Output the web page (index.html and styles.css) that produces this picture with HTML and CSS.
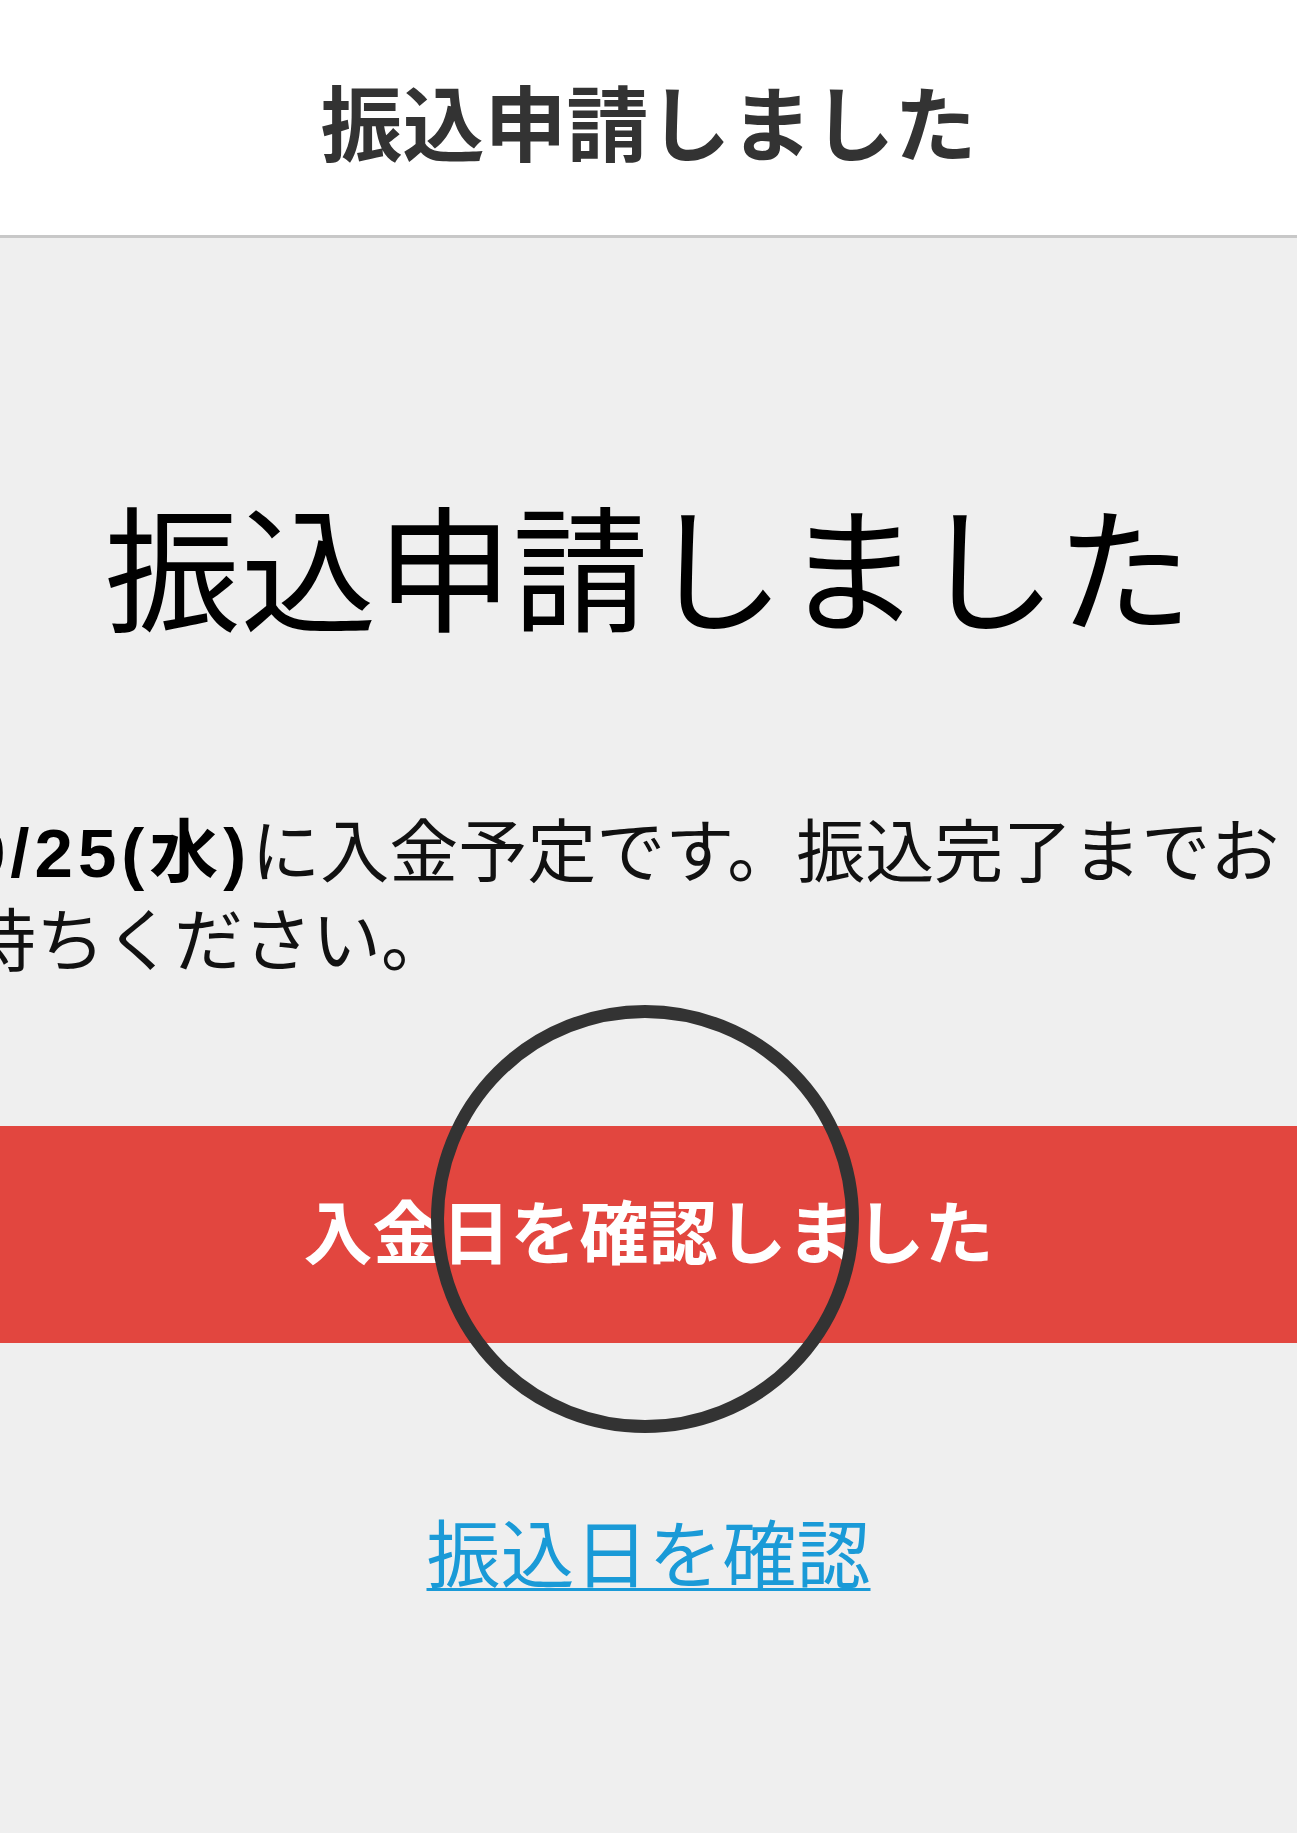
FILE: index.html
```html
<!DOCTYPE html>
<html lang="ja">
<head>
<meta charset="utf-8">
<title>振込申請しました</title>
<link rel="stylesheet" href="styles.css">
</head>
<body>
<header class="topbar">
  <h1 class="topbar-title">振込申請しました</h1>
</header>
<main class="content">
  <h2 class="headline">振込申請しました</h2>
  <p class="message"><strong class="date">9/25(水)</strong>に入金予定です。振込完了までお待ちください。</p>
  <button class="confirm-btn" type="button">入金日を確認しました</button>
  <div class="link-row"><a class="check-link" href="#">振込日を確認</a></div>
</main>
<div class="tap-ring"></div>
</body>
</html>
```
FILE: styles.css
```css
html, body {
  margin: 0;
  padding: 0;
  overflow-x: hidden;
}
body {
  background: #efefef;
  font-family: "Noto Sans CJK JP", "Noto Sans", sans-serif;
  color: #000;
  min-height: 1833px;
  position: relative;
}
.topbar {
  height: 235px;
  background: #ffffff;
  border-bottom: 3px solid #c8c8c8;
  display: flex;
  align-items: center;
  justify-content: center;
}
.topbar-title {
  margin: 0;
  padding-top: 4px;
  font-size: 82px;
  line-height: 1;
  font-weight: 700;
  color: #333333;
}
.content {
  display: flex;
  flex-direction: column;
}
.headline {
  margin: 257px 0 0;
  font-size: 136px;
  line-height: 136px;
  font-weight: 400;
  text-align: center;
  color: #000;
}
.message {
  margin: 175px 0 0 -33px;
  width: 1340px;
  font-size: 69px;
  line-height: 82px;
  color: #111;
  text-align: left;
}
.date {
  font-family: "Liberation Sans", "Noto Sans CJK JP", sans-serif;
  font-weight: 700;
  letter-spacing: 5px;
  color: #000;
}
.confirm-btn {
  margin: 149px 0 0;
  height: 217px;
  width: 100%;
  border: none;
  background: #e2463f;
  color: #ffffff;
  font-family: "Noto Sans CJK JP", sans-serif;
  font-size: 69px;
  font-weight: 700;
  padding: 0 0 12px;
  display: flex;
  align-items: center;
  justify-content: center;
}
.link-row {
  margin-top: 170px;
  text-align: center;
  line-height: 74px;
}
.check-link {
  font-size: 74px;
  color: #1a9ad7;
  text-decoration: underline;
  text-decoration-thickness: 3px;
  text-underline-offset: 6px;
}
.tap-ring {
  position: absolute;
  left: 431px;
  top: 1005px;
  width: 428px;
  height: 428px;
  box-sizing: border-box;
  border: 13px solid #333333;
  border-radius: 50%;
  pointer-events: none;
}
```
